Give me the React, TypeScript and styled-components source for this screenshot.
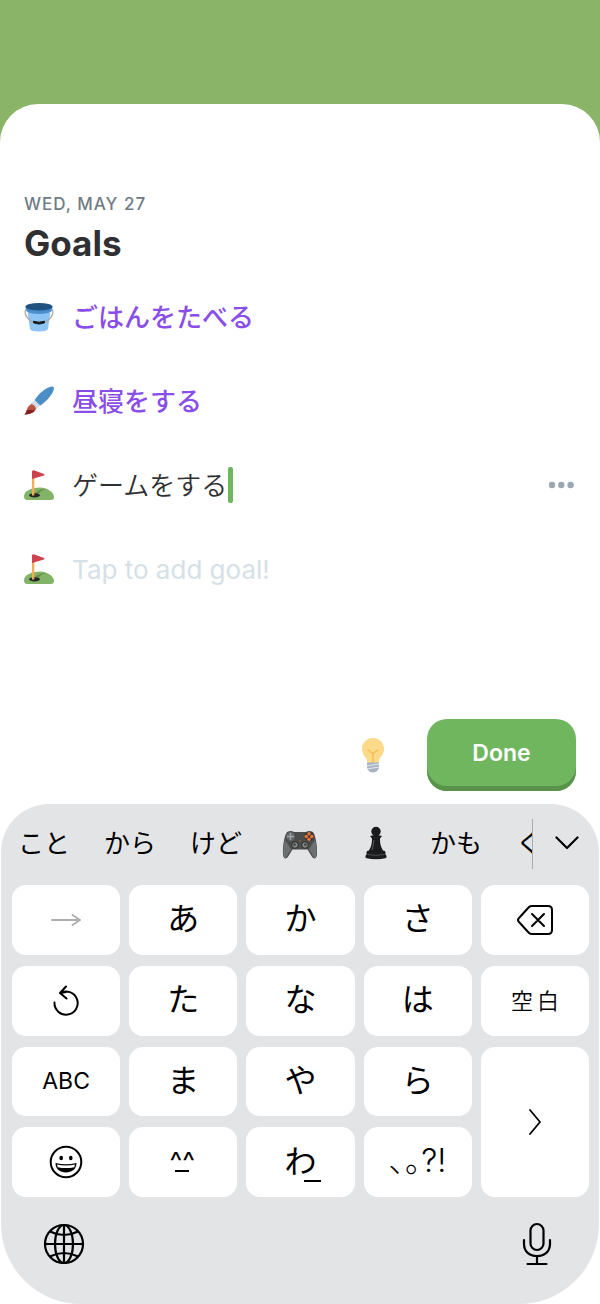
import React, { useState } from "react";
import styled, { createGlobalStyle } from "styled-components";

const latin = `Inter, "Noto Sans CJK JP", sans-serif`;
const kana = `"Noto Sans CJK JP", Inter, sans-serif`;

const GlobalStyle = createGlobalStyle`
  *, *::before, *::after { box-sizing: border-box; }
  body { margin: 0; background: #8ab468; font-family: ${latin}; }
  button, input { font: inherit; color: inherit; }
  button { border: 0; padding: 0; background: none; cursor: pointer; }
  svg { display: block; flex: none; }
`;

const Screen = styled.div`
  display: flex;
  flex-direction: column;
  min-height: 100vh;
  padding-top: 104px;
`;

const Sheet = styled.main`
  flex: 1;
  display: flex;
  flex-direction: column;
  background: #fff;
  border-radius: 38px 38px 0 0;
`;

const Content = styled.section`
  flex: 1;
  display: flex;
  flex-direction: column;
  padding: 88px 24px 13px;
`;

const DateLabel = styled.p`
  margin: 0;
  font-size: 17px;
  font-weight: 500;
  line-height: 24px;
  letter-spacing: 1px;
  color: #6f7c86;
`;

const Title = styled.h1`
  margin: 6px 0 0;
  font-size: 35px;
  font-weight: 700;
  line-height: 42px;
  color: #303032;
`;

const GoalList = styled.ul`
  list-style: none;
  margin: 11px 0 0;
  padding: 0;
`;

const GoalRow = styled.li`
  display: flex;
  align-items: center;
  height: 84px;
  font-size: 26px;
  line-height: 36px;
`;

const GoalIcon = styled.span`
  width: 48px;
`;

const GoalText = styled.span`
  padding-bottom: 3px;
  font-family: ${kana};
  font-weight: 500;
  color: #8a4ee8;
`;

const GoalInput = styled.input<{ $grow?: boolean }>`
  field-sizing: ${(p) => (p.$grow ? "fixed" : "content")};
  ${(p) => p.$grow && "flex: 1;"}
  min-width: 0;
  height: 39px;
  padding: 0 1px ${(p) => (p.$grow ? 0 : 3)}px 0;
  border: 0;
  outline: 0;
  background: none;
  font-family: ${(p) => (p.$grow ? latin : kana)};
  font-weight: ${(p) => (p.$grow ? 400 : 350)};
  color: #303032;
  caret-color: #6fb65f;
  &::placeholder { color: #d6e0e7; opacity: 1; }
`;

const Caret = styled.span`
  width: 5px;
  height: 36px;
  border-radius: 2px;
  background: #6fb65f;
`;

const MoreButton = styled.button`
  margin-left: auto;
`;

const Actions = styled.div`
  display: flex;
  justify-content: flex-end;
  align-items: center;
  gap: 42px;
  margin-top: auto;
`;

const DoneButton = styled.button`
  width: 149px;
  height: 72px;
  padding-bottom: 5px;
  border-radius: 20px;
  background: #6fb65f;
  box-shadow: inset 0 -5px 0 #589349;
  color: #fff;
  font-size: 23px;
  font-weight: 600;
`;

const Keyboard = styled.section`
  margin: 0 1px;
  padding: 15px 10px 13px 11px;
  border-radius: 48px 48px 80px 80px;
  background: #e3e4e6;
  color: #000;
`;

const CandidateBar = styled.div`
  display: flex;
  align-items: center;
  height: 50px;
  margin-bottom: 16px;
  padding: 0 10px 0 6px;
`;

const Candidates = styled.div`
  flex: 1;
  min-width: 0;
  display: flex;
  align-items: center;
  gap: 34px;
  height: 50px;
  overflow: hidden;
  border-right: 1px solid #a9abad;
`;

const Candidate = styled.button`
  flex: none;
  min-width: 26px;
  font-family: ${kana};
  font-size: 26px;
  line-height: 36px;
`;

const CandidateText = styled.span`
  display: block;
  padding-bottom: 4px;
`;

const ExpandButton = styled.button`
  margin-left: 22px;
`;

const KeyGrid = styled.div`
  display: grid;
  grid-template-columns: repeat(5, 1fr);
  grid-template-rows: repeat(4, 1fr);
  gap: 11px 9px;
  height: 312px;
`;

const Key = styled.button<{ $tall?: boolean; $kind?: "label" | "space" | "marks" }>`
  position: relative;
  display: flex;
  align-items: center;
  justify-content: center;
  ${(p) => p.$tall && "grid-row: span 2;"}
  border-radius: 14px;
  background: #fff;
  font-family: ${(p) => (p.$kind === "label" || p.$kind === "marks" ? latin : kana)};
  font-size: ${(p) => (p.$kind === "label" ? 23 : p.$kind === "space" ? 22 : 32)}px;
  font-weight: ${(p) => (p.$kind === "space" ? 350 : 400)};
  line-height: 40px;
`;

const KeyText = styled.span`
  padding-bottom: 7px;
`;

const SpaceText = styled.span`
  padding: 0 0 4px 4px;
  letter-spacing: 4px;
`;

const Marks = styled.span`
  padding-bottom: 3px;
  font-weight: 300;
`;

const Face = styled.span`
  padding-right: 2px;
  font-family: ${latin};
  font-size: 27px;
  line-height: 32px;
`;

const UnderMark = styled.span<{ $right?: boolean }>`
  position: absolute;
  left: ${(p) => (p.$right ? 58 : 46)}px;
  bottom: ${(p) => (p.$right ? 15 : 25)}px;
  width: ${(p) => (p.$right ? 17 : 14)}px;
  height: 2px;
  background: #000;
`;

const BottomBar = styled.div`
  display: flex;
  align-items: center;
  justify-content: space-between;
  height: 94px;
  padding: 0 37px 0 31px;
`;

const line = {
  fill: "none",
  stroke: "currentColor",
  strokeLinecap: "round" as const,
  strokeLinejoin: "round" as const,
};

const Bucket = () => (
  <svg width="30" height="30" viewBox="0 0 30 30" aria-hidden="true">
    <path d="M3 6 6 27q1 2.500 9 2.500t9-2.500l3-21z" fill="#8ec5f5" />
    <path d="M1.500 4.500 2.200 9Q6 12 15 12t12.800-3l.7-4.500z" fill="#4a8fcb" />
    <ellipse cx="15" cy="4.800" rx="13.500" ry="3.800" fill="#20527f" />
    <path d="M1.800 7.500C-.5 12.500 4 18 9.500 20.500M28.200 7.500c2.300 5-2.200 10.500-7.700 13" fill="none" stroke="#a9aaa8" strokeWidth="1.300" />
    <path d="M9.500 19.200q5.500 2 11 0v1.600q-5.500 2.600-11 0z" fill="#17191c" stroke="#17191c" strokeLinejoin="round" />
  </svg>
);

const Brush = () => (
  <svg width="30" height="30" viewBox="0 0 30 30" aria-hidden="true">
    <path d="M29.300.8q1.300 1-.3 5c-3 6-8.500 11-13 14l-5.500-5.500C13.500 9.500 18.500 4 24.500 1.500q3.700-1.600 4.800-.7z" fill="#4b8ec6" />
    <path d="m10.700 14 5.500 5.500-4 3.500-5.500-5.500z" fill="#d4dce4" />
    <path d="M7.500 18q3.500 1 4.500 4.500c-1 4.500-6 5.500-11.500 6C3 26 2.500 20 7.500 18z" fill="#b95543" />
    <path d="M3 24c2.500 1 4-1.500 5 .5 1 0 2-1 3-1-1.500 4-6.500 5-10.500 5Q2 27 3 24z" fill="#84201f" />
  </svg>
);

const Golf = () => (
  <svg width="30" height="30" viewBox="0 0 30 30" aria-hidden="true">
    <path d="M0 26C0 21 8 17.500 16 17.500c7 0 14 4.500 14 9.500q0 3-3 3H3q-3 0-3-4z" fill="#83b366" />
    <path d="M11 23c3-2 5-4 11-4-6 1-6 5-11 6z" fill="#648d4c" />
    <ellipse cx="10.500" cy="25.300" rx="5.500" ry="2.100" fill="#24282a" />
    <path d="M8 1h2.300v24.500H8z" fill="#f3ad52" />
    <path d="M8 1q1-1 2.500-.5L20 4q1 .7 0 1.400L8 9z" fill="#cf414f" />
  </svg>
);

const Bulb = () => (
  <svg width="24" height="36" viewBox="0 0 24 36" aria-hidden="true">
    <path d="M12 1c6.500 0 11 4.800 11 11 0 7-5.500 8-5.500 14h-11C6.500 20 1 19 1 12 1 5.800 5.500 1 12 1z" fill="#fbda89" />
    <path d="m6.500 12.500 5.500 4 5.500-4M12 16.500V26" fill="none" stroke="#f7be51" strokeWidth="1.500" strokeLinejoin="round" />
    <path d="M6 25.500h12V31q-2 4.500-6 4.500T6 31z" fill="#a8b4c2" />
    <path d="m6 29 12-2M6 32l12-2" stroke="#e2e8ee" strokeWidth="1.200" />
  </svg>
);

const Dots = () => (
  <svg width="28" height="8" viewBox="0 0 28 8" fill="#9aa6b1" aria-hidden="true">
    <circle cx="4" cy="4" r="3.200" /><circle cx="13.300" cy="4" r="3.200" /><circle cx="22.600" cy="4" r="3.200" />
  </svg>
);

const Gamepad = () => (
  <svg width="44" height="36" viewBox="-1 -1 44 36" aria-hidden="true">
    <path d="M10 5q4-2 7 0h12q3-2 7 0c2.500 3 4.500 14 4 22 0 5-3.500 6-5.500 2l-4-6.500h-15l-4 6.500c-2 4-5.500 3-5.500-2C5.500 19 7.500 8 10 5z" fill="#4b4d4d" />
    <path d="M8 13c-2 5-2.500 18 0 18 2 0 3-6 6.500-8L9.500 15zM38 13c2 5 2.500 18 0 18-2 0-3-6-6.500-8l5-8z" fill="#6d7070" />
    <circle cx="13.500" cy="9.500" r="4.500" fill="#626565" />
    <path d="M13.500 6v7M10 9.500h7" stroke="#a2a5a5" strokeWidth="1.400" />
    <circle cx="18" cy="18" r="3.300" fill="#858888" stroke="#292b2b" />
    <circle cx="28" cy="18" r="3.300" fill="#858888" stroke="#292b2b" />
    <circle cx="17.500" cy="17.500" r="1.500" fill="#4d4f4f" />
    <circle cx="28.500" cy="17.500" r="1.500" fill="#4d4f4f" />
    <circle cx="32" cy="9.500" r="4.500" fill="#343636" />
    <g fill="#ef7532"><circle cx="32" cy="6.800" r="1.700" /><circle cx="32" cy="12.200" r="1.700" /><circle cx="34.700" cy="9.500" r="1.700" /><circle cx="29.300" cy="9.500" r="1.700" /></g>
    <circle cx="23" cy="13.500" r="1" fill="#9b4a36" />
  </svg>
);

const Pawn = () => (
  <svg width="42" height="36" viewBox="0 1 42 36" fill="#191b1c" aria-hidden="true">
    <circle cx="22" cy="6.500" r="4.700" />
    <path d="M16 11q6-2 12 0l-2 2.500c0 6 1 9 4 13.500H14c3-4.500 4-7.500 4-13.500z" />
    <path d="M13 26q9-2 18 0 1 2 .3 3 2 2 1 4Q22 35.500 11.700 33q-1-2 1-4-.7-1 .3-3z" />
    <path d="M20 15q-.5 6-2 10" stroke="#55595a" fill="none" />
    <path d="M13.500 29.500q8.500 1.500 17 0" stroke="#4a4d4e" fill="none" />
  </svg>
);

const ChevronDown = () => (
  <svg width="24" height="16" viewBox="0 0 24 16" {...line} strokeWidth="2.200" aria-hidden="true"><path d="m1.500 1.500 10.500 10.500L22.500 1.500" /></svg>
);
const ArrowRight = () => (
  <svg width="30" height="12" viewBox="0 0 30 12" {...line} stroke="#aeaeae" strokeWidth="1.800" aria-hidden="true"><path d="M1 6h28M21.500 1 29 6l-7.500 5" /></svg>
);
const Backspace = () => (
  <svg width="36" height="30" viewBox="0 0 36 30" {...line} strokeWidth="2" aria-hidden="true">
    <path d="M12 2q1.200-1 3-1h16q4 0 4 4v20q0 4-4 4H15q-1.800 0-3-1L2 17q-2-2 0-4zM15 9l12 12M27 9 15 21" />
  </svg>
);
const Undo = () => (
  <svg width="26" height="32" viewBox="0 0 26 32" {...line} strokeWidth="2" aria-hidden="true">
    <path d="M1.500 17.500A11.600 11.600 0 1 0 7 8.200L13 7M13 1.500 7 8l6.500 5.500" />
  </svg>
);
const Smiley = () => (
  <svg width="34" height="34" viewBox="0 0 34 34" aria-hidden="true">
    <circle cx="17" cy="17" r="15.300" fill="none" stroke="#000" strokeWidth="2" />
    <ellipse cx="12.200" cy="13" rx="1.800" ry="2.300" /><ellipse cx="21.800" cy="13" rx="1.800" ry="2.300" />
    <path d="M6.500 18q10.500 2.500 21 0c0 6-4.500 9.500-10.500 9.500S6.500 24 6.500 18z" />
    <path d="M8 19.500q9 2 18 0l-.7 2.700q-8.300 1.800-16.600 0z" fill="#fff" />
  </svg>
);
const NextChevron = () => (
  <svg width="14" height="28" viewBox="0 0 14 28" {...line} strokeWidth="1.800" aria-hidden="true"><path d="m2 2 10 12L2 26" /></svg>
);
const Globe = () => (
  <svg width="42" height="42" viewBox="0 0 42 42" fill="none" stroke="#000" strokeWidth="2.200" aria-hidden="true">
    <circle cx="21" cy="21" r="19" /><ellipse cx="21" cy="21" rx="9" ry="19" />
    <path d="M21 2v38M2 21h38M7 8.500q14 7 28 0M7 33.500q14-7 28 0" />
  </svg>
);
const Mic = () => (
  <svg width="30" height="44" viewBox="0 0 30 44" {...line} strokeWidth="2.200" aria-hidden="true">
    <rect x="8.500" y="2" width="13" height="26" rx="6.500" />
    <path d="M2 18v4c0 7.500 5.500 12 13 12s13-4.500 13-12v-4M15 34v8M5.500 42h19" />
  </svg>
);

const kanaKey = (c: string) => <Key key={c} type="button"><KeyText>{c}</KeyText></Key>;

const wordCandidate = (word: string) => (
  <Candidate key={word} type="button"><CandidateText>{word}</CandidateText></Candidate>
);

export default function App() {
  const [goal, setGoal] = useState("ゲームをする");
  const [next, setNext] = useState("");

  return (
    <Screen>
      <GlobalStyle />
      <Sheet>
        <Content>
          <DateLabel>WED, MAY 27</DateLabel>
          <Title>Goals</Title>
          <GoalList>
            <GoalRow><GoalIcon><Bucket /></GoalIcon><GoalText lang="ja">ごはんをたべる</GoalText></GoalRow>
            <GoalRow><GoalIcon><Brush /></GoalIcon><GoalText lang="ja">昼寝をする</GoalText></GoalRow>
            <GoalRow>
              <GoalIcon><Golf /></GoalIcon>
              <GoalInput lang="ja" aria-label="Goal 3" value={goal} onChange={(e) => setGoal(e.target.value)} />
              <Caret />
              <MoreButton type="button" aria-label="More options"><Dots /></MoreButton>
            </GoalRow>
            <GoalRow>
              <GoalIcon><Golf /></GoalIcon>
              <GoalInput $grow aria-label="New goal" placeholder="Tap to add goal!" value={next} onChange={(e) => setNext(e.target.value)} />
            </GoalRow>
          </GoalList>
          <Actions>
            <button type="button" aria-label="Ideas"><Bulb /></button>
            <DoneButton type="button">Done</DoneButton>
          </Actions>
        </Content>

        <Keyboard aria-label="Keyboard" lang="ja">
          <CandidateBar>
            <Candidates>
              {["こと", "から", "けど"].map(wordCandidate)}
              <Candidate type="button" aria-label="Game controller"><Gamepad /></Candidate>
              <Candidate type="button" aria-label="Chess pawn"><Pawn /></Candidate>
              {["かも", "く"].map(wordCandidate)}
            </Candidates>
            <ExpandButton type="button" aria-label="More candidates"><ChevronDown /></ExpandButton>
          </CandidateBar>
          <KeyGrid>
            <Key type="button" aria-label="Next character"><ArrowRight /></Key>
            {["あ", "か", "さ"].map(kanaKey)}
            <Key type="button" aria-label="Delete"><Backspace /></Key>
            <Key type="button" aria-label="Undo"><Undo /></Key>
            {["た", "な", "は"].map(kanaKey)}
            <Key type="button" $kind="space"><SpaceText>空白</SpaceText></Key>
            <Key type="button" $kind="label">ABC</Key>
            {["ま", "や", "ら"].map(kanaKey)}
            <Key type="button" $tall aria-label="Confirm"><NextChevron /></Key>
            <Key type="button" aria-label="Emoji"><Smiley /></Key>
            <Key type="button"><Face>^^</Face><UnderMark /></Key>
            <Key type="button"><KeyText>わ</KeyText><UnderMark $right /></Key>
            <Key type="button" $kind="marks"><Marks>､｡?!</Marks></Key>
          </KeyGrid>
          <BottomBar>
            <button type="button" aria-label="Switch keyboard"><Globe /></button>
            <button type="button" aria-label="Dictation"><Mic /></button>
          </BottomBar>
        </Keyboard>
      </Sheet>
    </Screen>
  );
}
